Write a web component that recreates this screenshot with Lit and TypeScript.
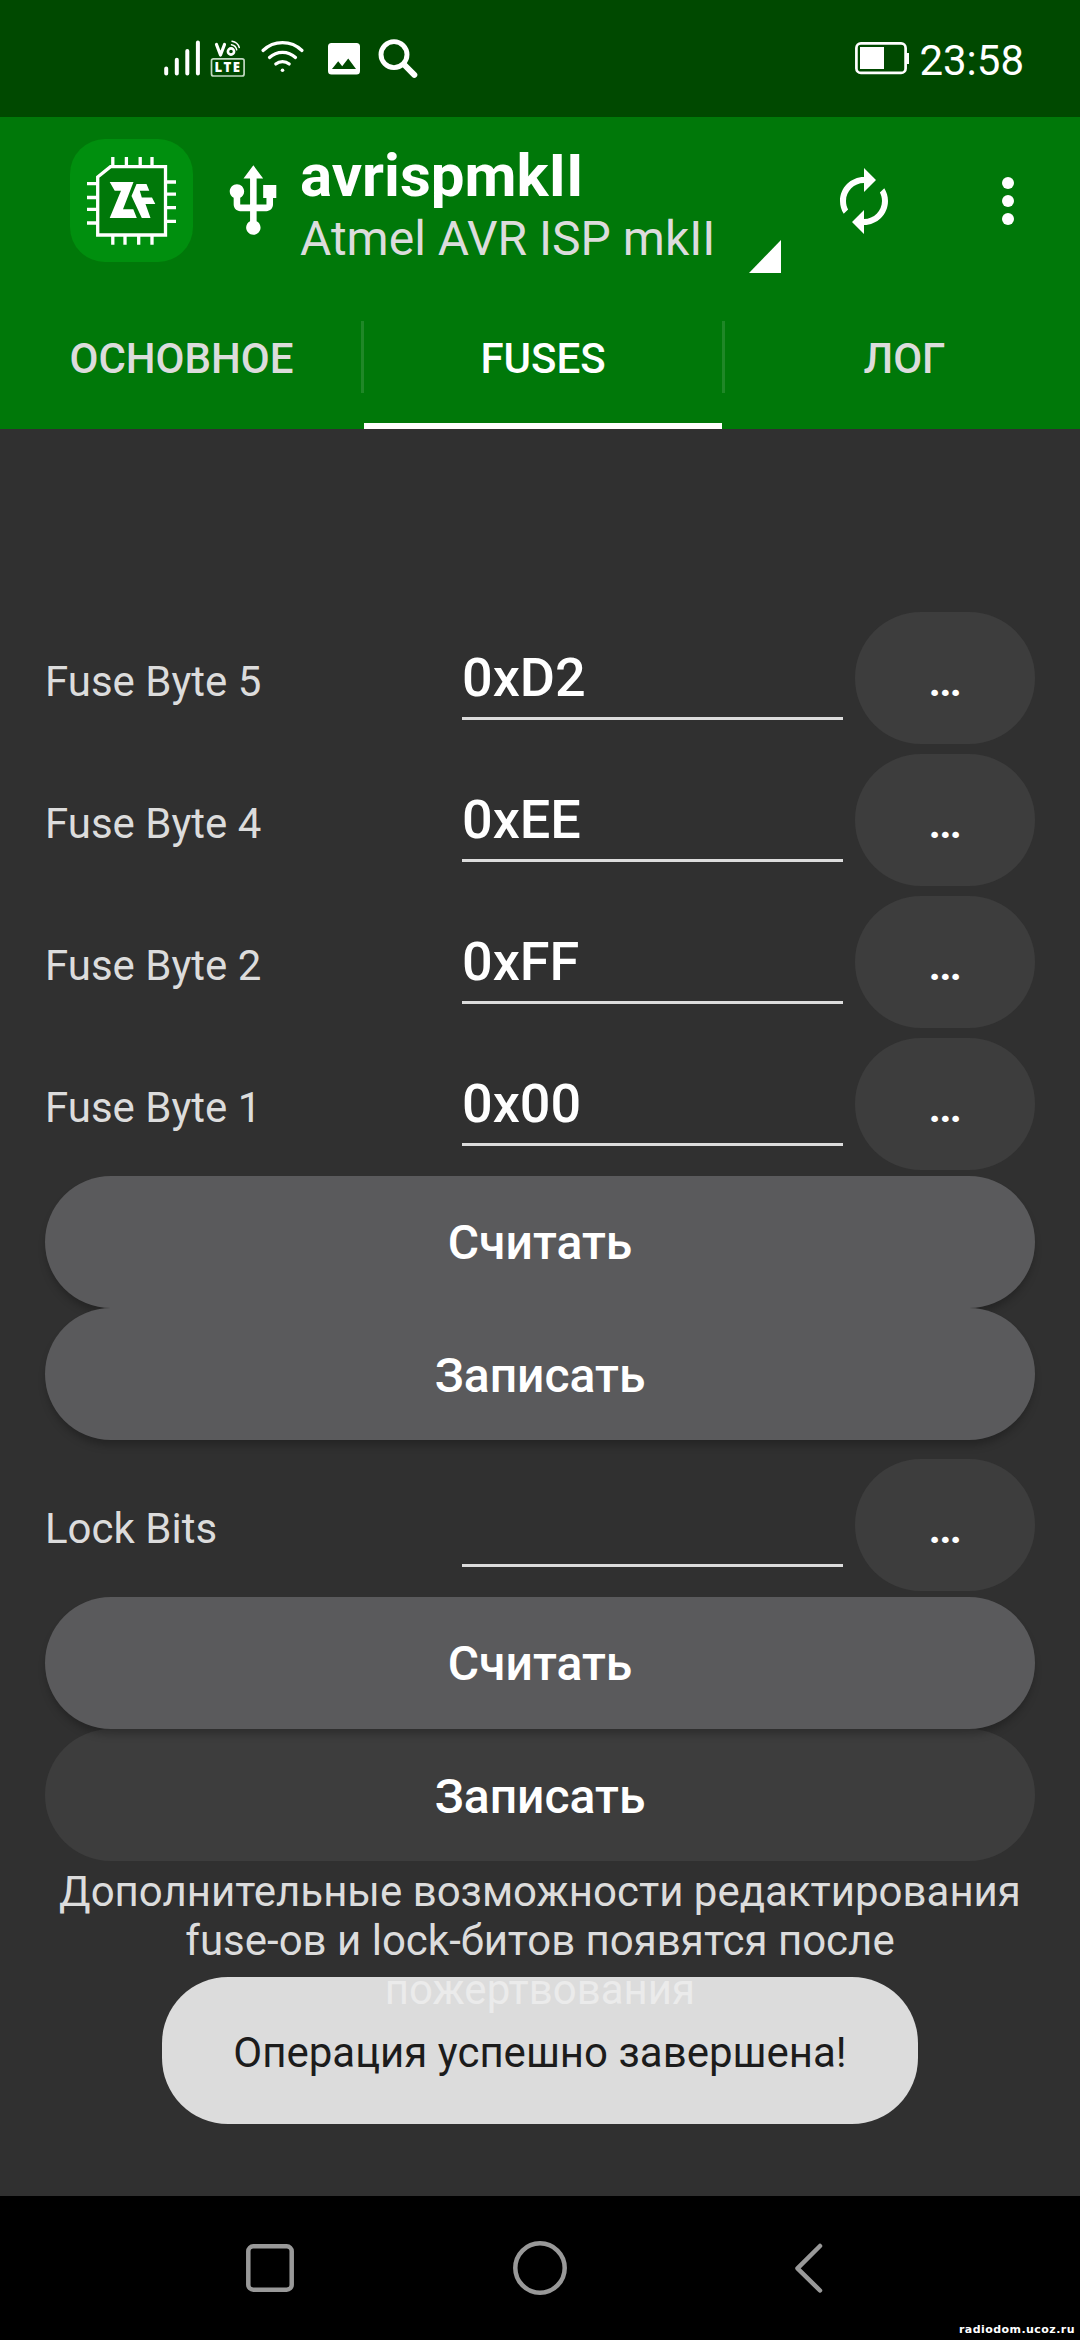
import { LitElement, html, svg, css } from "lit";
import { customElement, property } from "lit/decorators.js";

interface Fuse {
  label: string;
  value: string;
}

const FUSES: Fuse[] = [
  { label: "Fuse Byte 5", value: "0xD2" },
  { label: "Fuse Byte 4", value: "0xEE" },
  { label: "Fuse Byte 2", value: "0xFF" },
  { label: "Fuse Byte 1", value: "0x00" },
];

@customElement("status-bar")
class StatusBar extends LitElement {
  static styles = css`
    :host {
      display: flex;
      justify-content: space-between;
      height: 117px;
      background: #004900;
      color: #fff;
    }
    svg {
      display: block;
    }
    .left {
      margin-left: 140px;
      margin-top: 20px;
    }
    .right {
      display: flex;
      margin-top: 20px;
      margin-right: 56px;
    }
    .clock {
      margin-top: 16px;
      font-size: 42px;
      line-height: 49px;
    }
  `;
  render() {
    return html`
      <svg class="left" width="300" height="80" viewBox="0 0 300 80" fill="none" stroke="#fff" stroke-linecap="round">
        <g stroke-width="4">
          <path d="M26.2 48.500V53.500M36.800 39.800V53.500M47.300 31V53.500M57.900 22.500V53.500" />
        </g>
        <g stroke-width="3.500" stroke-linejoin="round">
          <path d="M76.500 24.500l4 10.500 4-10.500" stroke-width="3.200" />
          <circle cx="91" cy="31.500" r="3.100" stroke-width="2.600" />
          <path d="M91.500 24.800a6.500 6.500 0 0 1 5.200 5M92 21.200a9 9 0 0 1 7.300 6.300" stroke-width="1.500" />
          <rect x="71.500" y="38.800" width="32.600" height="17.200" rx="2" stroke="#c2d8c2" stroke-width="1.700" />
        </g>
        <text x="74.500" y="52" fill="#fff" stroke="none" font-family="Open Sans" font-weight="800" font-size="13.200" letter-spacing="0.500" textLength="26">LTE</text>
        <g stroke-width="3.200">
          <path d="M123 30.500a28 28 0 0 1 39 0M129.500 37.500a19 19 0 0 1 26 0M135.800 44a10.500 10.500 0 0 1 13.400 0" />
        </g>
        <circle cx="142.500" cy="50.300" r="1.800" fill="#fff" stroke="none" />
        <path fill="#fff" stroke="none" fill-rule="evenodd" d="M191.500 23h25a3.500 3.500 0 0 1 3.500 3.500v24.500a3.500 3.500 0 0 1-3.500 3.500h-25a3.500 3.500 0 0 1-3.500-3.500V26.500a3.500 3.500 0 0 1 3.500-3.500zM192 49h24l-7.800-10.500-6 7.800-4-5z" />
        <circle cx="254" cy="34.600" r="13" stroke-width="4.900" />
        <path d="M264 44.500l10.300 10.300" stroke-width="6" />
      </svg>
      <div class="right">
        <svg width="64" height="80" viewBox="0 0 64 80">
          <rect x="1.400" y="23.400" width="49.200" height="29.500" rx="4.500" fill="none" stroke="#fff" stroke-width="2.700" />
          <rect x="5" y="27" width="24" height="22" fill="#fff" />
          <path d="M51 33h3v11h-3z" fill="#fff" />
        </svg>
        <span class="clock">23:58</span>
      </div>
    `;
  }
}

@customElement("app-header")
class AppHeader extends LitElement {
  static styles = css`
    :host {
      display: block;
      height: 312px;
      background: #007809;
      color: #fff;
    }
    svg {
      display: block;
      flex: none;
    }
    .bar {
      display: flex;
      height: 168px;
      padding-left: 70px;
    }
    .logo {
      margin-top: 22px;
    }
    .usb {
      margin: 44.700px 0 0 21.300px;
    }
    .device {
      width: 442px;
      margin-left: 7px;
      margin-top: 24px;
    }
    .name {
      font-weight: 700;
      font-size: 60px;
      line-height: 70px;
      white-space: nowrap;
    }
    .model {
      font-size: 48px;
      line-height: 56px;
      color: #dcdcdc;
      white-space: nowrap;
    }
    .spinner {
      margin: 123px 0 0 7px;
    }
    .refresh {
      margin: 48px 0 0 47px;
    }
    .more {
      margin: 48px 0 0 72px;
    }
    .tabs {
      display: grid;
      grid-template-columns: 361px 3px 358px 3px 355px;
      height: 144px;
    }
    .tab {
      box-sizing: border-box;
      display: flex;
      justify-content: center;
      padding: 49px 0 0 2px;
      font-size: 42px;
      line-height: 49px;
      font-weight: 500;
      color: #dcdcdc;
    }
    .active {
      padding-left: 0;
      color: #fff;
      border-bottom: 6px solid #fff;
    }
    .last {
      padding-left: 4px;
    }
    .divider {
      height: 72px;
      margin-top: 36px;
      background: #1f8727;
    }
  `;
  render() {
    return html`
      <div class="bar">
        <svg class="logo" width="123" height="123" viewBox="0 0 123 123">
          <rect width="123" height="123" rx="35" fill="#008f0e" />
          <path d="M42.800 18v10M56.400 18v10M70.200 18v10M82 18v10M42.800 95v10.800M55 95v10.800M68.700 95v10.800M82 95v10.800M17 44.700h10M17 58.500h10M17 70.300h10M17 84h10M96 43h10M96 55.200h10M96 68.700h10M96 82.300h10" stroke="#fff" stroke-width="3.300" />
          <path d="M27.700 38L40.500 27.700H95.500V96H27.700z" fill="#007809" stroke="#fff" stroke-width="3.300" />
          <path fill="#fff" d="M39.700 43H63.500L53 70.200H63.300L66.800 79H39.700L51 51.700H44.700z" />
          <path fill="#fff" d="M66.500 45H76.500L79.300 51.700H69.800L71.800 58.500H82L85.300 65H75.500L80.500 79H71.800L61.500 57z" />
        </svg>
        <svg class="usb" width="78.700" height="78.700" viewBox="0 0 24 24" fill="#fff">
          <path d="M15 7v4h1v2h-3V5h2l-3-4-3 4h2v8H8v-2.070c.7-.37 1.200-1.080 1.200-1.930 0-1.210-.99-2.200-2.200-2.200-1.210 0-2.200.99-2.200 2.200 0 .85.5 1.560 1.200 1.930V13c0 1.110.89 2 2 2h3v3.050c-.71.37-1.200 1.100-1.200 1.950 0 1.220.99 2.200 2.200 2.200 1.210 0 2.200-.98 2.200-2.200 0-.85-.49-1.580-1.200-1.950V15h3c1.110 0 2-.89 2-2v-2h1V7h-4z" />
        </svg>
        <div class="device">
          <div class="name">avrispmkII</div>
          <div class="model">Atmel AVR ISP mkII</div>
        </div>
        <svg class="spinner" width="32" height="33" viewBox="0 0 32 33"><path d="M0 33L32 0V33z" fill="#fff" /></svg>
        <svg class="refresh" width="72" height="72" viewBox="0 0 24 24" fill="#fff">
          <path d="M12 6v3l4-4-4-4v3c-4.420 0-8 3.580-8 8 0 1.570.46 3.030 1.240 4.260L6.700 14.800c-.45-.83-.7-1.790-.7-2.800 0-3.310 2.690-6 6-6zm6.760 1.740L17.300 9.200c.44.84.7 1.790.7 2.800 0 3.310-2.690 6-6 6v-3l-4 4 4 4v-3c4.420 0 8-3.580 8-8 0-1.570-.46-3.030-1.240-4.260z" />
        </svg>
        <svg class="more" width="72" height="72" viewBox="0 0 24 24" fill="#fff">
          <circle cx="12" cy="6" r="2" /><circle cx="12" cy="12" r="2" /><circle cx="12" cy="18" r="2" />
        </svg>
      </div>
      <div class="tabs">
        <div class="tab">ОСНОВНОЕ</div>
        <div class="divider"></div>
        <div class="tab active">FUSES</div>
        <div class="divider"></div>
        <div class="tab last">ЛОГ</div>
      </div>
    `;
  }
}

@customElement("fuse-row")
class FuseRow extends LitElement {
  @property() label = "";
  @property() value = "";
  static styles = css`
    :host {
      display: grid;
      grid-template-columns: 417px 381px 12px 180px;
      height: 132px;
    }
    .label {
      margin-top: 45px;
      font-size: 42px;
      line-height: 49px;
      color: #dcdcdc;
    }
    .field {
      box-sizing: border-box;
      height: 108px;
      padding-top: 34px;
      border-bottom: 3px solid #dcdcdc;
      font-size: 54px;
      line-height: 63px;
      font-weight: 500;
      color: #fff;
    }
    .edit {
      grid-column: 4;
      box-sizing: border-box;
      padding-top: 40px;
      border-radius: 66px;
      background: #3d3d3d;
      color: #fff;
      text-align: center;
      font-size: 48px;
      line-height: 56px;
      font-weight: 500;
    }
  `;
  render() {
    return html`
      <span class="label">${this.label}</span>
      <div class="field">${this.value}</div>
      <div class="edit">…</div>
    `;
  }
}

@customElement("nav-bar")
class NavBar extends LitElement {
  static styles = css`
    :host {
      display: flex;
      justify-content: space-between;
      position: relative;
      box-sizing: border-box;
      height: 144px;
      padding: 42px 240px 0;
      background: #000;
    }
    .mark {
      position: absolute;
      right: 5px;
      bottom: 3px;
      font: bold 11px/14px "DejaVu Sans", sans-serif;
      letter-spacing: 0.45px;
      color: #fff;
    }
  `;
  render() {
    const shapes = [
      svg`<rect x="8.300" y="8.300" width="43.400" height="43.400" rx="5" />`,
      svg`<circle cx="30" cy="30" r="24.700" />`,
      svg`<path d="M40 8L17.500 30.300L40 52.500" />`,
    ];
    return html`
      ${shapes.map(
        (s) => html`<svg width="60" height="60" viewBox="0 0 60 60" fill="none" stroke="#999" stroke-width="4.500" stroke-linecap="round" stroke-linejoin="round">${s}</svg>`
      )}
      <span class="mark">radiodom.ucoz.ru</span>
    `;
  }
}

@customElement("app-root")
class AppRoot extends LitElement {
  static styles = css`
    :host {
      display: flex;
      flex-direction: column;
      position: relative;
      width: 1080px;
      height: 2340px;
      overflow: hidden;
      background: #303030;
      font-family: Roboto, sans-serif;
    }
    .content {
      flex: 1;
      padding: 183px 45px 0;
    }
    .fuses {
      display: flex;
      flex-direction: column;
      gap: 10px;
      margin-bottom: 6px;
    }
    .lock {
      margin: 19px 0 6px;
    }
    .btn {
      box-sizing: border-box;
      height: 132px;
      padding-top: 39px;
      border-radius: 66px;
      background: #5a5a5c;
      box-shadow: 0 7px 9px -2px rgba(0, 0, 0, 0.26);
      color: #fff;
      text-align: center;
      font-size: 48px;
      line-height: 56px;
      font-weight: 500;
    }
    .second {
      padding-top: 40px;
    }
    .raised {
      position: relative;
    }
    .disabled {
      background: #3d3d3d;
      box-shadow: none;
    }
    .note {
      margin: 6px 0 0;
      font-size: 42px;
      line-height: 49px;
      color: #dcdcdc;
      text-align: center;
    }
    .toast {
      position: absolute;
      left: 162px;
      top: 1977px;
      width: 756px;
      height: 147px;
      box-sizing: border-box;
      padding-top: 51px;
      border-radius: 66px;
      background: #dcdcdc;
      color: #1c1c1c;
      text-align: center;
      font-size: 42px;
      line-height: 49px;
    }
    .ghost {
      position: absolute;
      left: 0;
      right: 0;
      top: -12px;
      color: #ebebeb;
    }
  `;
  render() {
    return html`
      <status-bar></status-bar>
      <app-header></app-header>
      <div class="content">
        <div class="fuses">
          ${FUSES.map((f) => html`<fuse-row .label=${f.label} .value=${f.value}></fuse-row>`)}
        </div>
        <div class="btn">Считать</div>
        <div class="btn second raised">Записать</div>
        <fuse-row class="lock" .label=${"Lock Bits"}></fuse-row>
        <div class="btn raised">Считать</div>
        <div class="btn second disabled">Записать</div>
        <p class="note">Дополнительные возможности редактирования fuse-ов и lock-битов появятся после</p>
      </div>
      <nav-bar></nav-bar>
      <div class="toast">
        <span class="ghost">пожертвования</span>
        Операция успешно завершена!
      </div>
    `;
  }
}
